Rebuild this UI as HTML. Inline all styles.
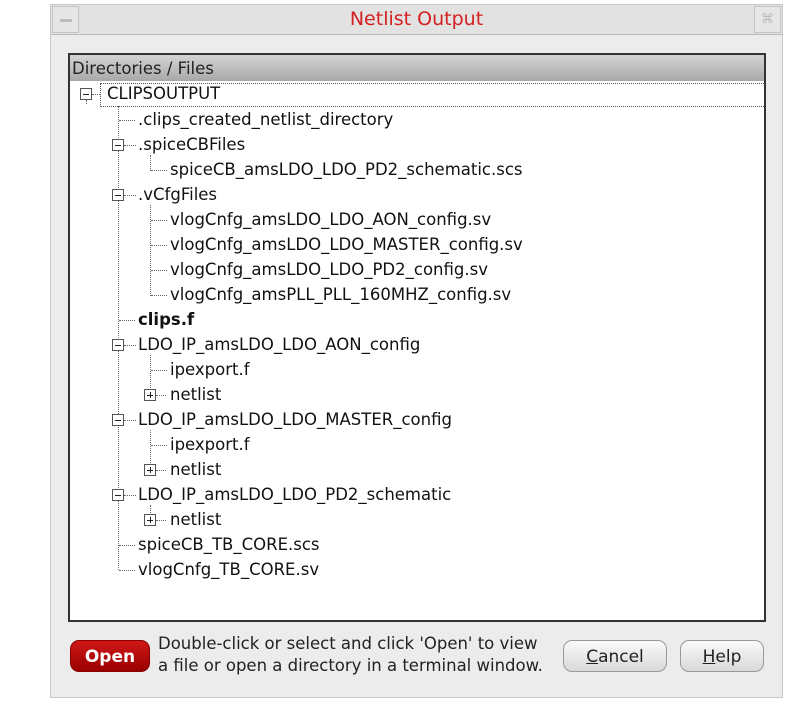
<!DOCTYPE html>
<html><head><style>
body{margin:0;width:789px;height:702px;background:#fff;position:relative;overflow:hidden;font-family:"DejaVu Sans","Liberation Sans",sans-serif;}
.dlg{position:absolute;left:50px;top:4px;width:733px;height:694px;background:#ececec;border:1px solid #c8c8c8;box-sizing:border-box;}
.title{position:absolute;left:0;top:0;width:100%;height:30px;background:#e2e2e2;border-bottom:1px solid #bbb;box-sizing:border-box;}
.tb{position:absolute;top:1px;width:27px;height:27px;border:1px solid #c4c4c4;box-sizing:border-box;background:#e6e6e6}
.ttl{position:absolute;left:0;width:100%;top:3px;text-align:center;color:#d42020;font-size:19px;}
.panel{position:absolute;left:68px;top:53px;width:698px;height:569px;border:2px solid #333;background:#fff;box-sizing:border-box;}
.hdr{position:absolute;left:0;top:0;width:100%;height:26px;background:linear-gradient(#d4d4d4,#a8a8a8);font-size:16.5px;color:#222;line-height:28px;padding-left:2px;box-sizing:border-box;}
.t{position:absolute;font-size:16.5px;color:#111;white-space:nowrap;line-height:18px;}
.vl{position:absolute;border-left:1px dotted #666;width:0;}
.hl{position:absolute;border-top:1px dotted #666;height:0;}
.bx{position:absolute;width:12px;height:12px;border:1px solid #555;background:#fff;box-sizing:border-box;}
.bx:after{content:"";position:absolute;left:2px;top:4.5px;width:6px;height:1.5px;background:#222}
.bx.p:before{content:"";position:absolute;left:4.5px;top:2px;width:1.5px;height:6px;background:#222}
.btn{position:absolute;top:640px;height:32px;border-radius:9px;font-size:17px;text-align:center;line-height:32px;box-sizing:border-box;}
.msg{position:absolute;left:158px;top:633px;font-size:16.5px;line-height:22px;color:#222;white-space:nowrap;}
</style></head><body>
<div class="dlg">
 <div class="title">
  <div class="tb" style="left:1px"><div style="position:absolute;left:7px;top:12px;width:12px;height:3px;background:#bbb"></div></div>
  <div class="ttl">Netlist Output</div>
  <div class="tb" style="right:1px;color:#bbb;font-size:13px;text-align:center;line-height:25px">⌘</div>
 </div>
</div>
<div class="panel">
 <div class="hdr">Directories / Files</div>
</div>
<div style="position:absolute;left:100px;top:83px;width:664px;height:24px;border:1px dotted #555;border-right:none;box-sizing:border-box"></div>
<div class="vl" style="left:86px;top:100px;height:4px"></div>
<div class="vl" style="left:118px;top:106px;height:464px"></div>
<div class="vl" style="left:150px;top:155px;height:16px"></div>
<div class="vl" style="left:150px;top:205px;height:91px"></div>
<div class="vl" style="left:150px;top:355px;height:35px"></div>
<div class="vl" style="left:150px;top:430px;height:35px"></div>
<div class="vl" style="left:150px;top:505px;height:10px"></div>
<div class="bx" style="left:80px;top:88px"></div><div class="hl" style="left:92px;top:94px;width:8px"></div>
<div class="t" style="left:107px;top:85px">CLIPSOUTPUT</div>

<div class="hl" style="left:119px;top:120px;width:16px"></div><div class="t" style="left:138px;top:111px">.clips_created_netlist_directory</div>
<div class="bx" style="left:112px;top:139px"></div><div class="hl" style="left:124px;top:145px;width:12px"></div><div class="t" style="left:138px;top:136px">.spiceCBFiles</div>
<div class="hl" style="left:151px;top:170px;width:16px"></div><div class="t" style="left:170px;top:161px">spiceCB_amsLDO_LDO_PD2_schematic.scs</div>
<div class="bx" style="left:112px;top:189px"></div><div class="hl" style="left:124px;top:195px;width:12px"></div><div class="t" style="left:138px;top:186px">.vCfgFiles</div>
<div class="hl" style="left:151px;top:220px;width:16px"></div><div class="t" style="left:170px;top:211px">vlogCnfg_amsLDO_LDO_AON_config.sv</div>
<div class="hl" style="left:151px;top:245px;width:16px"></div><div class="t" style="left:170px;top:236px">vlogCnfg_amsLDO_LDO_MASTER_config.sv</div>
<div class="hl" style="left:151px;top:270px;width:16px"></div><div class="t" style="left:170px;top:261px">vlogCnfg_amsLDO_LDO_PD2_config.sv</div>
<div class="hl" style="left:151px;top:295px;width:16px"></div><div class="t" style="left:170px;top:286px">vlogCnfg_amsPLL_PLL_160MHZ_config.sv</div>
<div class="hl" style="left:119px;top:320px;width:16px"></div><div class="t" style="left:138px;top:311px;font-weight:bold">clips.f</div>
<div class="bx" style="left:112px;top:339px"></div><div class="hl" style="left:124px;top:345px;width:12px"></div><div class="t" style="left:138px;top:336px">LDO_IP_amsLDO_LDO_AON_config</div>
<div class="hl" style="left:151px;top:370px;width:16px"></div><div class="t" style="left:170px;top:361px">ipexport.f</div>
<div class="bx p" style="left:144px;top:389px"></div><div class="hl" style="left:156px;top:395px;width:10px"></div><div class="t" style="left:170px;top:386px">netlist</div>
<div class="bx" style="left:112px;top:414px"></div><div class="hl" style="left:124px;top:420px;width:12px"></div><div class="t" style="left:138px;top:411px">LDO_IP_amsLDO_LDO_MASTER_config</div>
<div class="hl" style="left:151px;top:445px;width:16px"></div><div class="t" style="left:170px;top:436px">ipexport.f</div>
<div class="bx p" style="left:144px;top:464px"></div><div class="hl" style="left:156px;top:470px;width:10px"></div><div class="t" style="left:170px;top:461px">netlist</div>
<div class="bx" style="left:112px;top:489px"></div><div class="hl" style="left:124px;top:495px;width:12px"></div><div class="t" style="left:138px;top:486px">LDO_IP_amsLDO_LDO_PD2_schematic</div>
<div class="bx p" style="left:144px;top:514px"></div><div class="hl" style="left:156px;top:520px;width:10px"></div><div class="t" style="left:170px;top:511px">netlist</div>
<div class="hl" style="left:119px;top:545px;width:16px"></div><div class="t" style="left:138px;top:536px">spiceCB_TB_CORE.scs</div>
<div class="hl" style="left:119px;top:570px;width:16px"></div><div class="t" style="left:138px;top:561px">vlogCnfg_TB_CORE.sv</div>

<div class="btn" style="left:70px;width:80px;background:linear-gradient(#d01818,#9a0000);color:#fff;font-weight:bold;border:1px solid #800">Open</div>
<div class="msg">Double-click or select and click 'Open' to view<br>a file or open a directory in a terminal window.</div>
<div class="btn" style="left:563px;width:104px;background:linear-gradient(#fafafa,#d8d8d8);border:1px solid #999;color:#222"><u>C</u>ancel</div>
<div class="btn" style="left:680px;width:84px;background:linear-gradient(#fafafa,#d8d8d8);border:1px solid #999;color:#222"><u>H</u>elp</div>
</body></html>
